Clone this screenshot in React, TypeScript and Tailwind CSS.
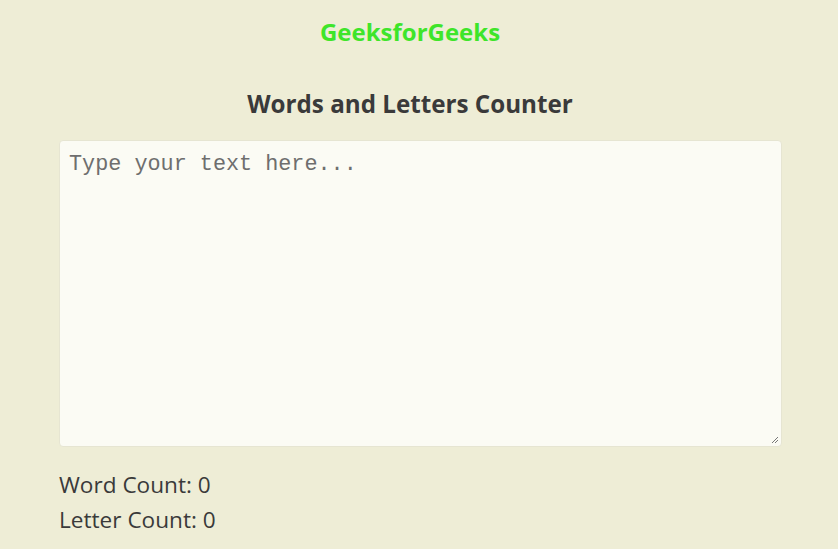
export default function App() {
  return (
    <div
      className="min-h-[549px] w-full bg-[#eeedd6] flex flex-col"
      style={{ fontFamily: '"Open Sans", "Noto Sans", sans-serif' }}
    >
      <div className="w-[820px] flex flex-col items-center">
        <h1 className="mt-[14px] text-[24px] font-bold leading-[36px] text-[#3ee52a]">GeeksforGeeks</h1>
        <h2 className="mt-[36px] text-[24.2px] font-bold leading-[36px] text-[#3a3a3a]">Words and Letters Counter</h2>
      </div>
      <div className="mt-[18px] ml-[59px] w-[723px] flex flex-col">
        <div className="relative h-[307px] rounded-[4px] bg-[#fbfbf4] border border-[#e6e5d2]">
          <div
            className="pl-[9px] pt-[9px] text-[21.8px] leading-[30px] text-[#6e6e6e]"
            style={{ fontFamily: '"Liberation Mono", "DejaVu Sans Mono", monospace' }}
          >
            Type your text here...
          </div>
          <svg className="absolute right-[2px] bottom-[2px]" width="8" height="8" viewBox="0 0 8 8">
            <path d="M7 1 L1 7 M7 4 L4 7" stroke="#777" strokeWidth="1" />
          </svg>
        </div>
        <div className="mt-[20px] text-[22.6px] leading-[35px] text-[#3a3a3a]">Word Count: 0</div>
        <div className="text-[22.6px] leading-[35px] text-[#3a3a3a]">Letter Count: 0</div>
      </div>
    </div>
  );
}
